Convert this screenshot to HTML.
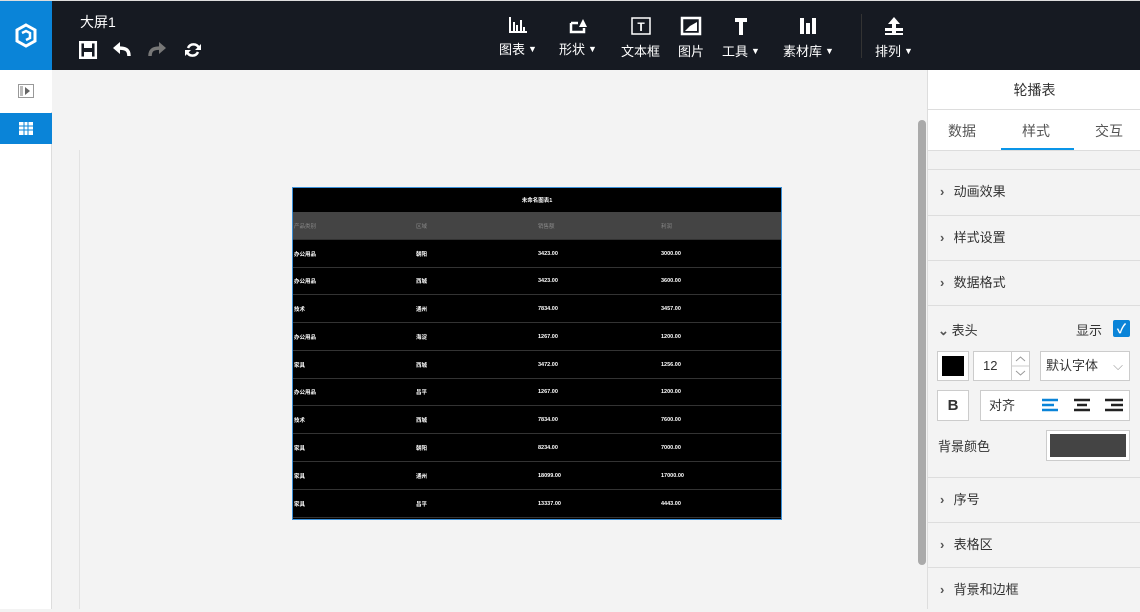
<!DOCTYPE html>
<html><head><meta charset="utf-8"><style>
*{margin:0;padding:0;box-sizing:border-box}
body{width:1140px;height:609px;overflow:hidden;background:#f3f3f3;font-family:"Liberation Sans","Noto Sans CJK SC",sans-serif;position:relative;color:#333}
.top{position:absolute;left:0;top:0;width:1140px;height:70px;background:#161a22;border-top:1px solid #ddd}
.logo{position:absolute;left:0;top:1px;width:52px;height:69px;background:#0a84d8}
.title{position:absolute;left:80px;top:12px;color:#fff;font-size:14px}
.tb{position:absolute;top:16px;color:#fff;font-size:13px;text-align:center;white-space:nowrap}
.tb svg{display:block;margin:0 auto 5px}
.tb i{font-style:normal;font-size:9px;vertical-align:2px;margin-left:3px}
.side{position:absolute;left:0;top:70px;width:52px;height:539px;background:#fff;border-right:1px solid #ddd}
.rp{position:absolute;left:927px;top:70px;width:213px;height:539px;background:#f3f3f3;border-left:1px solid #ddd}
.sec{position:absolute;left:0;width:213px;border-top:1px solid #ddd;font-size:13px;color:#333;padding-left:12px}
.sec b{display:inline-block;width:10px;font-weight:bold;color:#555}
.tbl{position:absolute;left:292px;top:187px;width:490px;height:333px;background:#000;border:1px solid #3a8fd8}
.tr{position:absolute;left:0;width:488px;border-bottom:1px solid #333;font-size:5.5px;color:#fff;font-weight:bold}
.tr span{position:absolute;top:50%;transform:translateY(-50%)}
</style></head><body>
<div class="top"></div>
<div class="logo"><svg width="52" height="69" viewBox="0 0 52 69"><path d="M26 24 L35 29 L35 40 L26 45 L17 40 L17 29 Z" fill="none" stroke="#fff" stroke-width="3"/><path d="M22 32 L26 30 L30 32 L30 37 L26 39" fill="none" stroke="#fff" stroke-width="2.5"/></svg></div>
<div class="title">大屏1</div>
<svg style="position:absolute;left:79px;top:41px" width="130" height="18" viewBox="0 0 130 18">
<rect x="1.2" y="1.2" width="15.6" height="15.6" fill="none" stroke="#fff" stroke-width="2.5"/><rect x="5" y="2" width="8" height="5" fill="#fff"/><rect x="5" y="11" width="8" height="5" fill="#fff"/>
<path d="M50 15 C50 8 46 7 38 7" fill="none" stroke="#fff" stroke-width="3.5"/><path d="M41 1 L34 7 L41 13Z" fill="#fff"/>
<path d="M71 15 C71 8 75 7 83 7" fill="none" stroke="#777" stroke-width="3.5"/><path d="M80 1 L87 7 L80 13Z" fill="#777"/>
<path d="M120 7 A6 6 0 0 0 109 7 M108 11 A6 6 0 0 0 119 11" fill="none" stroke="#fff" stroke-width="2.5"/><path d="M122 3 L122 9 L116 9Z M106 15 L106 9 L112 9Z" fill="#fff"/>
</svg>
<div class="tb" style="left:499px"><svg width="20" height="18"><path d="M2 1V16H19M6 6V16M9 9V16M13 4V16M16 11V16" stroke="#fff" stroke-width="2" fill="none"/></svg>图表<i>▼</i></div>
<div class="tb" style="left:559px"><svg width="20" height="18"><path d="M3 7H10M3 7V16H16V12" stroke="#fff" stroke-width="2.5" fill="none"/><path d="M11 11L15 3L19 11Z" fill="#fff"/></svg>形状<i>▼</i></div>
<div class="tb" style="left:621px"><svg width="22" height="20"><rect x="2" y="2" width="18" height="16" fill="none" stroke="#fff" stroke-width="1.5"/><text x="11" y="15" font-size="12" fill="#fff" text-anchor="middle" font-weight="bold">T</text></svg>文本框</div>
<div class="tb" style="left:678px"><svg width="22" height="20"><rect x="2" y="2" width="18" height="16" fill="none" stroke="#fff" stroke-width="2.5"/><path d="M5 15L10 10L17 6V15Z" fill="#fff"/></svg>图片</div>
<div class="tb" style="left:722px"><svg width="20" height="20"><path d="M4 2H16V6H12V19H8V6H4Z" fill="#fff"/></svg>工具<i>▼</i></div>
<div class="tb" style="left:783px"><svg width="22" height="20"><rect x="3" y="2" width="4" height="16" fill="#fff"/><rect x="9" y="7" width="4" height="11" fill="#fff"/><rect x="15" y="2" width="4" height="16" fill="#fff"/></svg>素材库<i>▼</i></div>
<div style="position:absolute;left:861px;top:14px;width:1px;height:44px;background:#333"></div>
<div class="tb" style="left:875px"><svg width="24" height="20"><path d="M12 1L6 8H18Z" fill="#fff"/><rect x="10" y="7" width="4" height="12" fill="#fff"/><rect x="3" y="12" width="18" height="3" fill="#fff"/><rect x="3" y="17" width="18" height="2" fill="#fff"/></svg>排列<i>▼</i></div>
<div class="side"><div style="position:absolute;top:0;left:0;width:52px;height:42px;background:#fff"><svg style="position:absolute;left:18px;top:14px" width="16" height="14"><rect x="0.5" y="0.5" width="15" height="13" fill="none" stroke="#999"/><rect x="2" y="2" width="3" height="10" fill="#bbb"/><path d="M7 3L12 7L7 11Z" fill="#666"/></svg></div>
<div style="position:absolute;top:43px;left:0;width:52px;height:31px;background:#0a84d8"><svg style="position:absolute;left:19px;top:9px" width="14" height="13"><rect width="14" height="13" fill="#fff"/><path d="M0 4H14M0 8H14M5 0V13M9 0V13" stroke="#0a84d8"/></svg></div></div>
<div style="position:absolute;left:79px;top:150px;width:1px;height:459px;background:#e2e2e2"></div>
<div style="position:absolute;left:918px;top:120px;width:8px;height:445px;background:#aaa;border-radius:4px"></div>
<div class="tbl">
<div class="tr" style="top:0;height:24px;border:0;text-align:center"><span style="left:0;width:488px">未命名图表1</span></div>
<div class="tr" style="top:24px;height:28px;background:#444;color:#888;font-weight:normal"><span style="left:1px">产品类别</span><span style="left:123px">区域</span><span style="left:245px">销售额</span><span style="left:368px">利润</span></div>
<div class="tr" style="top:52px;height:28px"><span style="left:1px">办公用品</span><span style="left:123px">朝阳</span><span style="left:245px">3423.00</span><span style="left:368px">3000.00</span></div>
<div class="tr" style="top:80px;height:27px"><span style="left:1px">办公用品</span><span style="left:123px">西城</span><span style="left:245px">3423.00</span><span style="left:368px">3600.00</span></div>
<div class="tr" style="top:107px;height:28px"><span style="left:1px">技术</span><span style="left:123px">通州</span><span style="left:245px">7834.00</span><span style="left:368px">3457.00</span></div>
<div class="tr" style="top:135px;height:28px"><span style="left:1px">办公用品</span><span style="left:123px">海淀</span><span style="left:245px">1267.00</span><span style="left:368px">1200.00</span></div>
<div class="tr" style="top:163px;height:28px"><span style="left:1px">家具</span><span style="left:123px">西城</span><span style="left:245px">3472.00</span><span style="left:368px">1256.00</span></div>
<div class="tr" style="top:191px;height:27px"><span style="left:1px">办公用品</span><span style="left:123px">昌平</span><span style="left:245px">1267.00</span><span style="left:368px">1200.00</span></div>
<div class="tr" style="top:218px;height:28px"><span style="left:1px">技术</span><span style="left:123px">西城</span><span style="left:245px">7834.00</span><span style="left:368px">7600.00</span></div>
<div class="tr" style="top:246px;height:28px"><span style="left:1px">家具</span><span style="left:123px">朝阳</span><span style="left:245px">8234.00</span><span style="left:368px">7000.00</span></div>
<div class="tr" style="top:274px;height:28px"><span style="left:1px">家具</span><span style="left:123px">通州</span><span style="left:245px">18099.00</span><span style="left:368px">17000.00</span></div>
<div class="tr" style="top:302px;height:28px"><span style="left:1px">家具</span><span style="left:123px">昌平</span><span style="left:245px">13337.00</span><span style="left:368px">4443.00</span></div>
</div>
<div class="rp">
<div style="position:absolute;top:0;left:0;width:213px;height:40px;background:#fff;border-bottom:1px solid #ddd;text-align:center;line-height:40px;font-size:14px">轮播表</div>
<div style="position:absolute;top:40px;left:0;width:213px;height:41px;background:#fff;border-bottom:1px solid #ddd;font-size:14px;color:#555">
<span style="position:absolute;left:20px;top:11px">数据</span><span style="position:absolute;left:94px;top:11px">样式</span><span style="position:absolute;left:167px;top:11px">交互</span>
<div style="position:absolute;left:73px;top:38px;width:73px;height:2px;background:#0a95e8"></div></div>
<div class="sec" style="top:99px;height:46px;line-height:44px"><b>›</b> 动画效果</div>
<div class="sec" style="top:145px;height:45px;line-height:44px"><b>›</b> 样式设置</div>
<div class="sec" style="top:190px;height:45px;line-height:44px"><b>›</b> 数据格式</div>
<div class="sec" style="top:235px;height:172px">
<div style="position:absolute;left:10px;top:14px"><b>⌄</b> 表头</div>
<div style="position:absolute;left:148px;top:14px">显示</div>
<div style="position:absolute;left:185px;top:14px;width:17px;height:17px;background:#0a84d8;border-radius:2px;color:#fff;font-size:13px;text-align:center;line-height:17px;font-weight:bold">✓</div>
<div style="position:absolute;left:9px;top:45px;width:32px;height:30px;background:#fff;border:1px solid #ccc;padding:4px"><div style="width:100%;height:100%;background:#000"></div></div>
<div style="position:absolute;left:45px;top:45px;width:57px;height:30px;background:#fff;border:1px solid #ccc;line-height:28px;padding-left:9px">12<div style="position:absolute;left:37px;top:0;width:1px;height:28px;background:#ccc"></div><svg style="position:absolute;left:38px;top:0" width="17" height="28"><path d="M4 9L8.5 5L13 9M4 19L8.5 23L13 19" stroke="#999" fill="none"/><path d="M0 14H17" stroke="#ccc"/></svg></div>
<div style="position:absolute;left:112px;top:45px;width:90px;height:30px;background:#fff;border:1px solid #ccc;line-height:28px;padding-left:5px">默认字体 <span style="color:#999;position:absolute;right:6px">⌵</span></div>
<div style="position:absolute;left:9px;top:84px;width:32px;height:31px;background:#fff;border:1px solid #ccc;text-align:center;line-height:29px;font-weight:bold;font-size:15px">B</div>
<div style="position:absolute;left:52px;top:84px;width:150px;height:31px;background:#fff;border:1px solid #ccc;line-height:29px;padding-left:8px">对齐
<svg style="position:absolute;left:58px;top:7px" width="92" height="16"><path d="M3 2H19M3 7H15M3 12H19" stroke="#0a84d8" stroke-width="2.5"/><path d="M35 2H51M38 7H48M35 12H51M66 2H84M72 7H84M66 12H84" stroke="#222" stroke-width="2.5"/></svg></div>
<div style="position:absolute;left:10px;top:130px">背景颜色</div>
<div style="position:absolute;left:118px;top:124px;width:84px;height:31px;background:#fff;border:1px solid #ccc;padding:3px"><div style="width:100%;height:100%;background:#444"></div></div>
</div>
<div class="sec" style="top:407px;height:45px;line-height:44px"><b>›</b> 序号</div>
<div class="sec" style="top:452px;height:45px;line-height:44px"><b>›</b> 表格区</div>
<div class="sec" style="top:497px;height:45px;line-height:44px"><b>›</b> 背景和边框</div>
</div>
</body></html>
